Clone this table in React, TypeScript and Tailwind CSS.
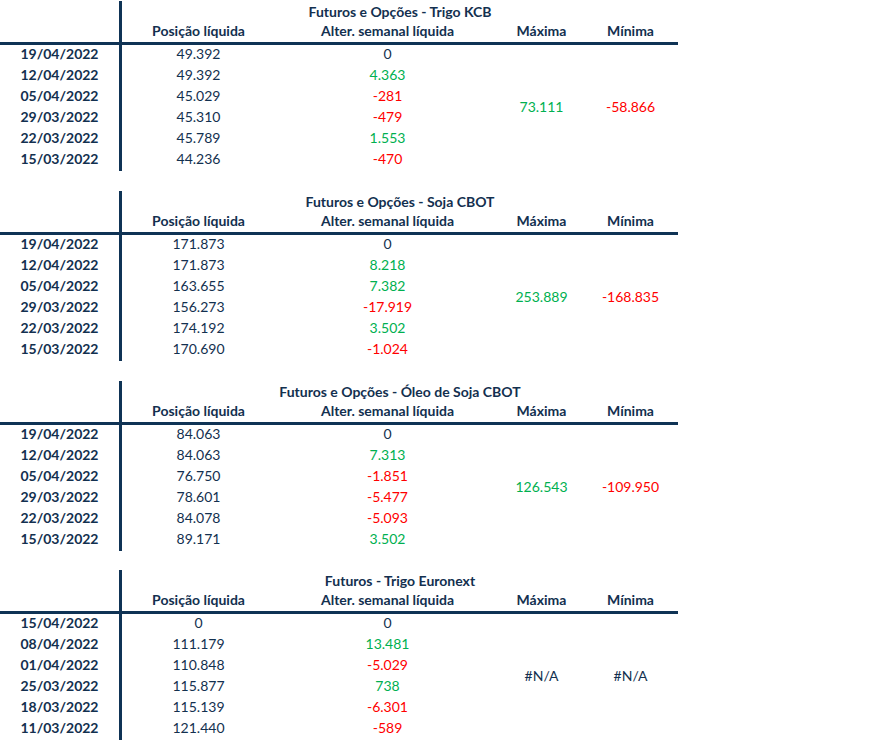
import React from 'react';

type Row = { date: string; pos: string; chg: string };
type Table = { title: string; rows: Row[]; max: string; min: string };

const tables: Table[] = [
  {
    title: 'Futuros e Opções - Trigo KCB',
    max: '73.111',
    min: '-58.866',
    rows: [
      { date: '19/04/2022', pos: '49.392', chg: '0' },
      { date: '12/04/2022', pos: '49.392', chg: '4.363' },
      { date: '05/04/2022', pos: '45.029', chg: '-281' },
      { date: '29/03/2022', pos: '45.310', chg: '-479' },
      { date: '22/03/2022', pos: '45.789', chg: '1.553' },
      { date: '15/03/2022', pos: '44.236', chg: '-470' },
    ],
  },
  {
    title: 'Futuros e Opções - Soja CBOT',
    max: '253.889',
    min: '-168.835',
    rows: [
      { date: '19/04/2022', pos: '171.873', chg: '0' },
      { date: '12/04/2022', pos: '171.873', chg: '8.218' },
      { date: '05/04/2022', pos: '163.655', chg: '7.382' },
      { date: '29/03/2022', pos: '156.273', chg: '-17.919' },
      { date: '22/03/2022', pos: '174.192', chg: '3.502' },
      { date: '15/03/2022', pos: '170.690', chg: '-1.024' },
    ],
  },
  {
    title: 'Futuros e Opções - Óleo de Soja CBOT',
    max: '126.543',
    min: '-109.950',
    rows: [
      { date: '19/04/2022', pos: '84.063', chg: '0' },
      { date: '12/04/2022', pos: '84.063', chg: '7.313' },
      { date: '05/04/2022', pos: '76.750', chg: '-1.851' },
      { date: '29/03/2022', pos: '78.601', chg: '-5.477' },
      { date: '22/03/2022', pos: '84.078', chg: '-5.093' },
      { date: '15/03/2022', pos: '89.171', chg: '3.502' },
    ],
  },
  {
    title: 'Futuros - Trigo Euronext',
    max: '#N/A',
    min: '#N/A',
    rows: [
      { date: '15/04/2022', pos: '0', chg: '0' },
      { date: '08/04/2022', pos: '111.179', chg: '13.481' },
      { date: '01/04/2022', pos: '110.848', chg: '-5.029' },
      { date: '25/03/2022', pos: '115.877', chg: '738' },
      { date: '18/03/2022', pos: '115.139', chg: '-6.301' },
      { date: '11/03/2022', pos: '121.440', chg: '-589' },
    ],
  },
];

// green for positive, red for negative, navy for zero / errors
function tone(v: string) {
  if (v.startsWith('-')) return 'text-[#ff0000]';
  if (v === '0' || v.startsWith('#')) return 'text-[#13304f]';
  return 'text-[#00b050]';
}

function CotTable({ t, short }: { t: Table; short: boolean }) {
  return (
    <div
      className={`grid grid-cols-[122px_153px_225px_83px_95px] content-start ${
        short ? 'h-[189px]' : 'h-[190px]'
      }`}
    >
      {/* title row */}
      <div className="h-[21px] mt-[1px] border-r-[3px] border-[#0f3355]" />
      <div className="col-span-4 h-[21px] mt-[1px] flex items-center justify-center font-bold">
        {t.title}
      </div>

      {/* header row */}
      <div className="h-[23px] border-r-[3px] border-b-[3px] border-[#0f3355]" />
      <div className="h-[23px] pb-[2px] border-b-[3px] border-[#0f3355] flex items-center justify-center font-bold">
        Posição líquida
      </div>
      <div className="h-[23px] pb-[2px] border-b-[3px] border-[#0f3355] flex items-center justify-center font-bold">
        Alter. semanal líquida
      </div>
      <div className="h-[23px] pb-[2px] border-b-[3px] border-[#0f3355] flex items-center justify-center font-bold">
        Máxima
      </div>
      <div className="h-[23px] pb-[2px] border-b-[3px] border-[#0f3355] flex items-center justify-center font-bold">
        Mínima
      </div>

      {/* data rows */}
      {t.rows.map((r, i) => (
        <React.Fragment key={r.date}>
          <div
            className="h-[21px] pb-[3px] border-r-[3px] border-[#0f3355] flex items-center justify-center font-bold"
            style={{ gridColumn: 1, gridRow: i + 3 }}
          >
            {r.date}
          </div>
          <div
            className="h-[21px] pb-[3px] flex items-center justify-center"
            style={{ gridColumn: 2, gridRow: i + 3 }}
          >
            {r.pos}
          </div>
          <div
            className={`h-[21px] pb-[3px] flex items-center justify-center ${tone(r.chg)}`}
            style={{ gridColumn: 3, gridRow: i + 3 }}
          >
            {r.chg}
          </div>
        </React.Fragment>
      ))}
      <div
        className={`pb-[3px] flex items-center justify-center ${tone(t.max)}`}
        style={{ gridColumn: 4, gridRow: '3 / span 6' }}
      >
        {t.max}
      </div>
      <div
        className={`pb-[3px] flex items-center justify-center ${tone(t.min)}`}
        style={{ gridColumn: 5, gridRow: '3 / span 6' }}
      >
        {t.min}
      </div>
    </div>
  );
}

export default function App() {
  return (
    <div
      className="w-[886px] h-[747px] overflow-hidden bg-white text-[#13304f] text-[14px] leading-none"
      style={{ fontFamily: 'Lato, "Liberation Sans", sans-serif' }}
    >
      {tables.map((t, i) => (
        <CotTable key={t.title} t={t} short={i === 2} />
      ))}
    </div>
  );
}
